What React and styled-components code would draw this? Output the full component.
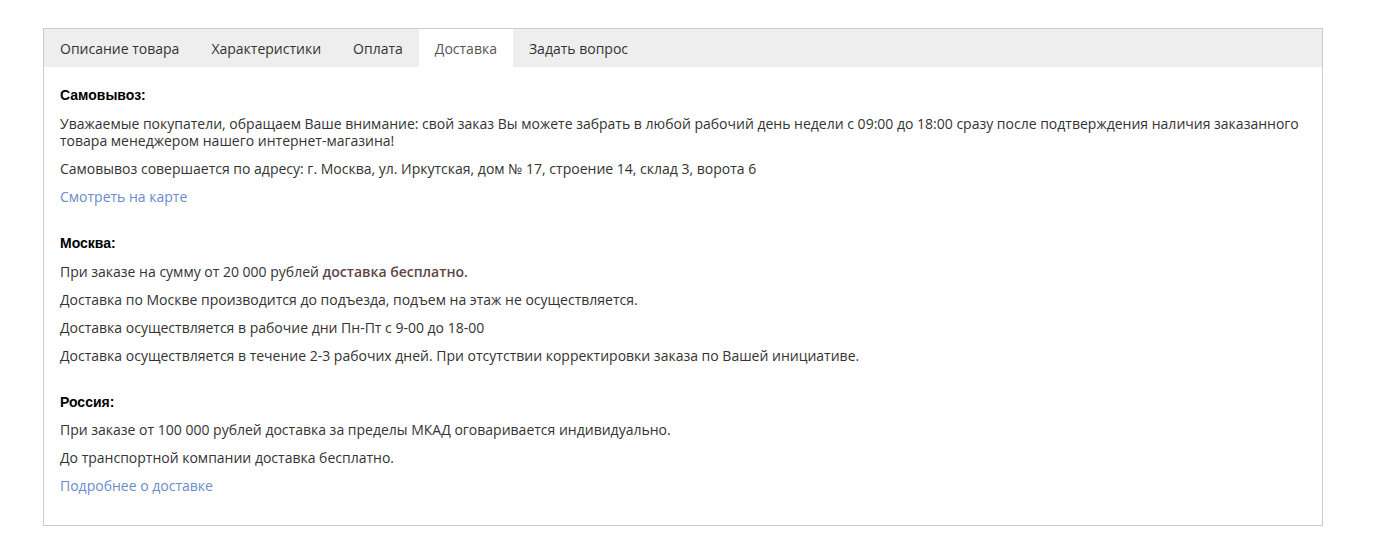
import React, { useState } from 'react';
import styled, { createGlobalStyle } from 'styled-components';

const GlobalStyle = createGlobalStyle`
  body {
    margin: 0;
    background: #fff;
    font-family: 'Open Sans', 'Noto Sans', sans-serif;
    color: #333;
  }
`;

const Page = styled.div`
  padding: 28px 0 20px 43px;
`;

const Box = styled.section`
  width: 1280px;
  box-sizing: border-box;
  border: 1px solid #cbcbcb;
`;

const TabBar = styled.nav`
  display: flex;
  background: #eeeeee;
  height: 38px;
`;

const Tab = styled.button`
  border: 0;
  margin: 0;
  padding: 0 16px;
  height: 38px;
  background: ${props => (props.active ? '#fff' : 'transparent')};
  color: ${props => (props.active ? '#555' : '#333')};
  font-family: 'Open Sans', 'Noto Sans', sans-serif;
  font-size: 14px;
  cursor: pointer;
`;

const Content = styled.div`
  padding: 20px 16px 30.5px;
`;

const Section = styled.div`
  margin-bottom: 29.5px;
  &:last-child {
    margin-bottom: 0;
  }
`;

const Heading = styled.h4`
  margin: 0 0 10px;
  font-family: 'Liberation Sans', Arial, sans-serif;
  font-weight: bold;
  font-size: 14px;
  line-height: 17.5px;
  color: #000;
`;

const Text = styled.p`
  margin: 0 0 10.5px;
  font-size: 14px;
  line-height: 17.5px;
  &:last-child {
    margin-bottom: 0;
  }
`;

const Strong = styled.b`
  color: #5e4646;
  font-weight: 600;
`;

const Link = styled.a`
  color: #6b8ccb;
  text-decoration: none;
`;

const tabs = ['Описание товара', 'Характеристики', 'Оплата', 'Доставка', 'Задать вопрос'];

export default function App() {
  const [active, setActive] = useState(3);
  return (
    <Page>
      <GlobalStyle />
      <Box>
        <TabBar>
          {tabs.map((t, i) => (
            <Tab key={t} active={i === active} onClick={() => setActive(i)}>
              {t}
            </Tab>
          ))}
        </TabBar>
        <Content>
          <Section>
            <Heading>Самовывоз:</Heading>
            <Text>
              Уважаемые покупатели, обращаем Ваше внимание: свой заказ Вы можете забрать в любой рабочий день недели с 09:00 до 18:00 сразу после подтверждения наличия заказанного товара менеджером нашего интернет-магазина!
            </Text>
            <Text>
              Самовывоз совершается по адресу: г. Москва, ул. Иркутская, дом № 17, строение 14, склад 3, ворота 6
            </Text>
            <Text>
              <Link href="#">Смотреть на карте</Link>
            </Text>
          </Section>
          <Section>
            <Heading>Москва:</Heading>
            <Text>
              При заказе на сумму от 20 000 рублей <Strong>доставка бесплатно.</Strong>
            </Text>
            <Text>Доставка по Москве производится до подъезда, подъем на этаж не осуществляется.</Text>
            <Text>Доставка осуществляется в рабочие дни Пн-Пт с 9-00 до 18-00</Text>
            <Text>
              Доставка осуществляется в течение 2-3 рабочих дней. При отсутствии корректировки заказа по Вашей инициативе.
            </Text>
          </Section>
          <Section>
            <Heading>Россия:</Heading>
            <Text>При заказе от 100 000 рублей доставка за пределы МКАД оговаривается индивидуально.</Text>
            <Text>До транспортной компании доставка бесплатно.</Text>
            <Text>
              <Link href="#">Подробнее о доставке</Link>
            </Text>
          </Section>
        </Content>
      </Box>
    </Page>
  );
}
